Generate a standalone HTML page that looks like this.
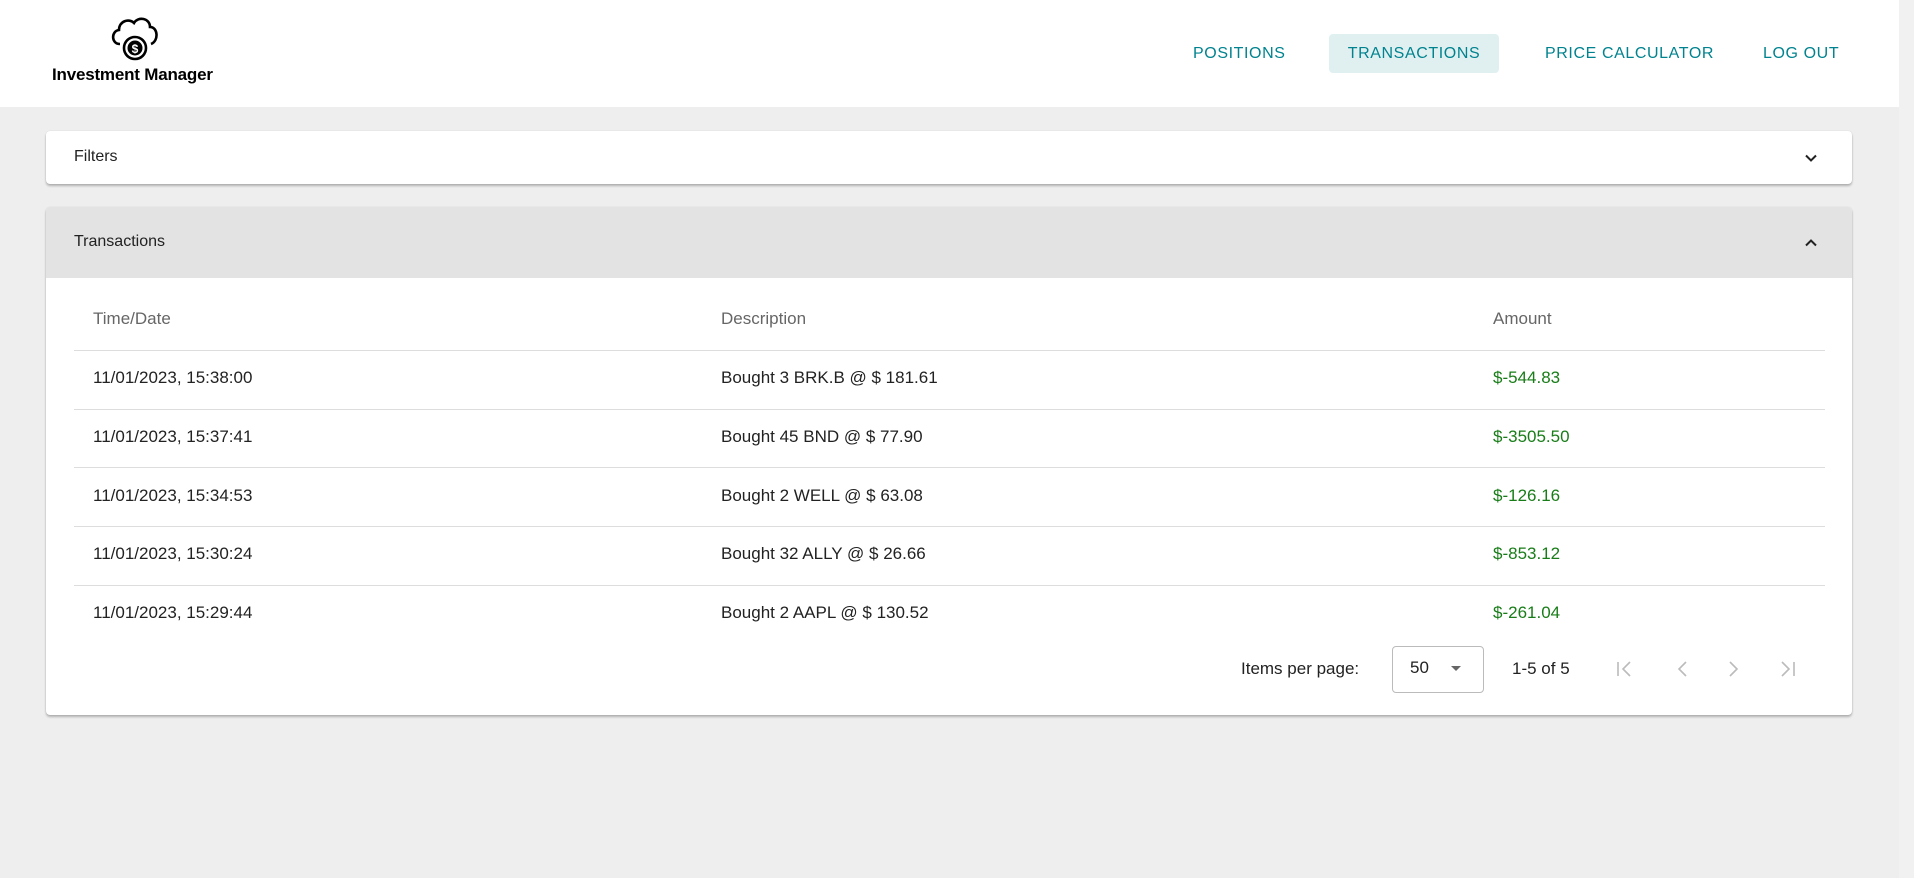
<!DOCTYPE html>
<html><head><meta charset="utf-8"><style>
*{margin:0;padding:0;box-sizing:border-box}
body{width:1914px;height:878px;background:#eeeeee;font-family:"Liberation Sans",sans-serif;position:relative;overflow:hidden;color:#222}
.hdr{position:absolute;left:0;top:0;width:1899px;height:107px;background:#fff}
.sb{position:absolute;right:0;top:0;width:15px;height:878px;background:#f1f1f1}
.nav{position:absolute;top:34px;height:39px;line-height:39px;font-size:16px;letter-spacing:0.6px;color:#00838f}
.act{background:#e0f0f1;border-radius:4px;text-align:center}
.logo{position:absolute;left:52px;top:65px;font-weight:bold;font-size:17px;color:#000;letter-spacing:-0.2px}
.card{position:absolute;left:46px;width:1806px;background:#fff;border-radius:4px;box-shadow:0 2px 2px rgba(0,0,0,.25),0 0 1px rgba(0,0,0,.15)}
.ct{position:absolute;left:28px;font-size:16px;color:#222}
.th{position:absolute;font-size:17px;color:#666}
.td{position:absolute;font-size:17px;color:#222}
.g{color:#187d18}
.line{position:absolute;left:28px;width:1751px;height:1px;background:#ddd}
</style></head><body>
<div class="hdr">
<svg style="position:absolute;left:108px;top:14px" width="54" height="48" viewBox="0 0 54 48">
<path d="M12 30 C3 30 3 17 11 16 C11 7 21 4 26 9 C30 2 42 4 42 13 C50 13 51 27 43 30" fill="none" stroke="#000" stroke-width="2.6"/>
<circle cx="27" cy="34" r="11" fill="#fff" stroke="#000" stroke-width="2.6"/>
<circle cx="27" cy="34" r="7.5" fill="#000"/>
<text x="27" y="39" font-size="12" font-weight="bold" text-anchor="middle" fill="#fff" font-family="Liberation Sans">$</text>
</svg>
<div class="logo">Investment Manager</div>
<div class="nav" style="left:1193px">POSITIONS</div>
<div class="nav act" style="left:1329px;width:170px">TRANSACTIONS</div>
<div class="nav" style="left:1545px">PRICE CALCULATOR</div>
<div class="nav" style="left:1763px">LOG OUT</div>
</div>
<div class="sb"></div>
<div class="card" style="top:131px;height:53px">
<div class="ct" style="top:17px">Filters</div>
<svg style="position:absolute;left:1758px;top:20px" width="14" height="14" viewBox="0 0 14 14"><path d="M2 4.5 L7 9.5 L12 4.5" fill="none" stroke="#222" stroke-width="2"/></svg>
</div>
<div class="card" style="top:207px;height:508px">
<div style="position:absolute;left:0;top:0;width:1806px;height:71px;background:#e3e3e3;border-radius:4px 4px 0 0"></div>
<div class="ct" style="top:26px">Transactions</div>
<svg style="position:absolute;left:1758px;top:29px" width="14" height="14" viewBox="0 0 14 14"><path d="M2 9.5 L7 4.5 L12 9.5" fill="none" stroke="#222" stroke-width="2"/></svg>
<div class="th" style="left:47px;top:102px">Time/Date</div>
<div class="th" style="left:675px;top:102px">Description</div>
<div class="th" style="left:1447px;top:102px">Amount</div>
<div class="line" style="top:143px"></div>
<div class="td" style="left:47px;top:161px">11/01/2023, 15:38:00</div><div class="td" style="left:675px;top:161px">Bought 3 BRK.B @ $ 181.61</div><div class="td g" style="left:1447px;top:161px">$-544.83</div>
<div class="line" style="top:202px"></div>
<div class="td" style="left:47px;top:220px">11/01/2023, 15:37:41</div><div class="td" style="left:675px;top:220px">Bought 45 BND @ $ 77.90</div><div class="td g" style="left:1447px;top:220px">$-3505.50</div>
<div class="line" style="top:260px"></div>
<div class="td" style="left:47px;top:279px">11/01/2023, 15:34:53</div><div class="td" style="left:675px;top:279px">Bought 2 WELL @ $ 63.08</div><div class="td g" style="left:1447px;top:279px">$-126.16</div>
<div class="line" style="top:319px"></div>
<div class="td" style="left:47px;top:337px">11/01/2023, 15:30:24</div><div class="td" style="left:675px;top:337px">Bought 32 ALLY @ $ 26.66</div><div class="td g" style="left:1447px;top:337px">$-853.12</div>
<div class="line" style="top:378px"></div>
<div class="td" style="left:47px;top:396px">11/01/2023, 15:29:44</div><div class="td" style="left:675px;top:396px">Bought 2 AAPL @ $ 130.52</div><div class="td g" style="left:1447px;top:396px">$-261.04</div>
<div class="td" style="left:1195px;top:452px">Items per page:</div>
<div style="position:absolute;left:1346px;top:439px;width:92px;height:47px;border:1px solid #bbb;border-radius:4px"></div>
<div class="td" style="left:1364px;top:451px">50</div>
<svg style="position:absolute;left:1405px;top:459px" width="10" height="6"><path d="M0 0 L10 0 L5 5Z" fill="#666"/></svg>
<div class="td" style="left:1466px;top:452px">1-5 of 5</div>
<svg style="position:absolute;left:1570px;top:452px" width="240" height="20" viewBox="0 0 240 20" fill="none" stroke="#bbb" stroke-width="1.6">
<path d="M2 3 V17 M14 3 L7 10 L14 17"/>
<path d="M70 3 L63 10 L70 17"/>
<path d="M114 3 L121 10 L114 17"/>
<path d="M166 3 L173 10 L166 17 M178 3 V17"/>
</svg>
</div>
</body></html>
